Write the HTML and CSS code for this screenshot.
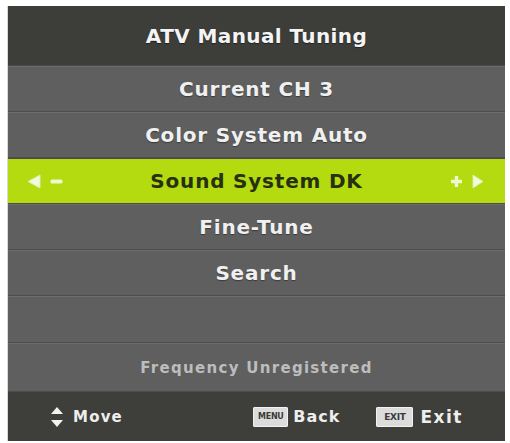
FILE: index.html
```html
<!DOCTYPE html>
<html>
<head>
<meta charset="utf-8">
<link rel="stylesheet" href="styles.css">
</head>
<body>
<div class="panel">
  <div class="title">ATV Manual Tuning</div>
  <div class="row">Current CH 3</div>
  <div class="row">Color System Auto</div>
  <div class="row active">
    <div class="side left">
      <svg class="tri" width="14" height="15" viewBox="0 0 14 15"><path d="M1 7.5 L13 1 L13 14 Z" fill="#f2f9dc" stroke="#dcedaa" stroke-width="1" stroke-linejoin="round"/></svg>
      <svg class="minus" width="13" height="5" viewBox="0 0 13 5"><rect x="0.5" y="0.5" width="12" height="4" rx="1.5" fill="#eef7d0"/></svg>
    </div>
    <div class="label">Sound System DK</div>
    <div class="side right">
      <svg class="plus" width="13" height="13" viewBox="0 0 13 13"><path d="M4.8 1 H8.2 V4.8 H12 V8.2 H8.2 V12 H4.8 V8.2 H1 V4.8 H4.8 Z" fill="#eef7d0"/></svg>
      <svg class="tri" width="12" height="15" viewBox="0 0 12 15"><path d="M11 7.5 L1 1 L1 14 Z" fill="#f2f9dc" stroke="#dcedaa" stroke-width="1" stroke-linejoin="round"/></svg>
    </div>
  </div>
  <div class="row">Fine-Tune</div>
  <div class="row">Search</div>
  <div class="row empty"></div>
  <div class="row status">Frequency Unregistered</div>
  <div class="footer">
    <div class="hint">
      <svg class="updown" width="14" height="22" viewBox="0 0 14 22"><path d="M7 1 L13 8 L1 8 Z" fill="#f2f2f2"/><path d="M1 14 L13 14 L7 21 Z" fill="#f2f2f2"/></svg>
      <span class="hint-text">Move</span>
    </div>
    <div class="hints-right">
      <span class="key key-menu">MENU</span>
      <span class="hint-text back">Back</span>
      <span class="key key-exit">EXIT</span>
      <span class="hint-text exit">Exit</span>
    </div>
  </div>
</div>
</body>
</html>
```

FILE: styles.css
```css
html, body {
  margin: 0;
  padding: 0;
  background: #ffffff;
}

body {
  width: 510px;
  height: 443px;
  overflow: hidden;
  font-family: "DejaVu Sans", "Liberation Sans", sans-serif;
  font-weight: bold;
}

.panel {
  margin: 6px 0 0 8px;
  width: 497px;
  height: 435px;
  display: flex;
  flex-direction: column;
  background: #5f5f5f;
  box-shadow: -1px 0 0 #d8d8d8;
}

.title {
  height: 60px;
  flex: none;
  display: flex;
  align-items: center;
  justify-content: center;
  background: #3d3e39;
  color: #f4f4f4;
  font-size: 20px;
  letter-spacing: 0.4px;
  text-shadow: 0 1px 1px #222;
  border-bottom: 1px solid #4a4a48;
  box-sizing: border-box;
}

.row {
  height: 46px;
  flex: none;
  box-sizing: border-box;
  display: flex;
  align-items: center;
  justify-content: center;
  background: #5f5f5f;
  color: #f0f0f0;
  font-size: 20px;
  letter-spacing: 0.8px;
  text-shadow: 0 1px 1px #3a3a3a;
  border-top: 1px solid #6c6c6c;
  border-bottom: 1px solid #4d4d4d;
}

.row.active {
  display: grid;
  grid-template-columns: 1fr auto 1fr;
  background: #b3db10;
  color: #283010;
  text-shadow: none;
  border-top: 1px solid #4c4c4a;
  border-bottom: 1px solid #4c4c4a;
}

.side {
  display: flex;
  align-items: center;
  gap: 9px;
}

.side.left {
  padding-left: 19px;
}

.side.right {
  justify-content: flex-end;
  padding-right: 21px;
}

.side svg {
  display: block;
}

.row.empty {
  height: 47px;
}

.row.status {
  height: 49px;
  font-size: 15px;
  letter-spacing: 1.3px;
  color: #bdbdbd;
  text-shadow: none;
}

.footer {
  flex: 1;
  display: flex;
  align-items: center;
  justify-content: space-between;
  padding: 0 42px 0 42px;
  background: #3e3e3a;
  color: #eeeeee;
}

.hint {
  display: flex;
  align-items: center;
  gap: 9px;
}

.updown {
  display: block;
}

.hint-text {
  font-size: 15px;
  letter-spacing: 1.2px;
}

.hints-right {
  display: flex;
  align-items: center;
}

.key {
  display: inline-flex;
  align-items: center;
  justify-content: center;
  height: 20px;
  border-radius: 2px;
  background: #dcdcdc;
  color: #3a3a3a;
  font-size: 8px;
  letter-spacing: -0.3px;
  box-shadow: inset 0 0 0 1px #f2f2f2;
}

.key-menu {
  width: 35px;
}

.key-exit {
  width: 37px;
  margin-left: 36px;
  font-size: 9px;
}

.back {
  margin-left: 5px;
  font-size: 16px;
  letter-spacing: 1px;
}

.exit {
  margin-left: 7px;
  font-size: 17px;
  letter-spacing: 1.5px;
}
```
